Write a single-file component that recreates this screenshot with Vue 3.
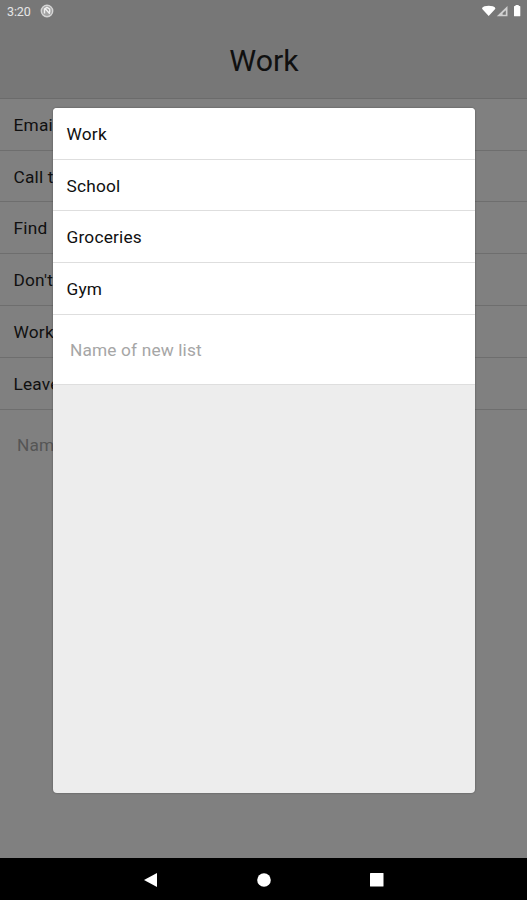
<script setup>
import { ref } from "vue";

const title = "Work";
const tasks = ref(["Email", "Call the", "Find", "Don't", "Work", "Leave"]);
const lists = ref(["Work", "School", "Groceries", "Gym"]);
const newTask = ref("");
const newList = ref("");

function addTask() {
  if (!newTask.value.trim()) return;
  tasks.value.push(newTask.value.trim());
  newTask.value = "";
}

function addList() {
  if (!newList.value.trim()) return;
  lists.value.push(newList.value.trim());
  newList.value = "";
}
</script>

<template>
  <div class="screen">
    <header class="header">
      <div class="status">
        <span class="clock">3:20</span>
        <svg class="notice" viewBox="0 0 14 14" width="14" height="14">
          <circle cx="7" cy="7" r="5.7" fill="#a2a2a2" stroke="#d4d4d4" stroke-width="1.4" />
          <path d="M4.5 9.5V5L7 3.4l2.7 1.7v3.4M5 4.5l4.8 5.2" fill="none" stroke="#f0f0f0" stroke-width="1.4" />
        </svg>
        <svg class="signals" viewBox="0 0 42 16" width="42" height="16">
          <path d="M2 6.8Q2 5 4.5 4.3Q8.7 3 12.9 4.3Q15.4 5 15.4 6.8L8.7 14Z" fill="#fff" />
          <path d="M27.5 4V14.3H16.8Z" fill="#d0d0d0" />
          <path d="M25.8 8.3V12.7H22.6V11.3Z" fill="#777" />
          <path d="M34 4.6Q34 4 34.6 4H35.5V3H38.7V4H39.7Q40.3 4 40.3 4.6V13.7Q40.3 14.3 39.7 14.3H34.6Q34 14.3 34 13.7Z" fill="#fff" />
        </svg>
      </div>
      <h1 class="title">{{ title }}</h1>
    </header>

    <main class="tasks">
      <div v-for="task in tasks" :key="task" class="row">{{ task }}</div>
      <input v-model="newTask" class="field" placeholder="Name of new task" @keyup.enter="addTask" />
    </main>

    <nav class="navbar">
      <svg viewBox="0 0 16 16" width="16" height="16"><path d="M1 8L14 1V15Z" fill="#fff" /></svg>
      <svg viewBox="0 0 16 16" width="16" height="16"><circle cx="8" cy="8" r="6.8" fill="#fff" /></svg>
      <svg viewBox="0 0 16 16" width="16" height="16"><rect x="1" y="1" width="13.5" height="13.5" rx="0.5" fill="#fff" /></svg>
    </nav>

    <!-- list picker -->
    <section class="modal">
      <div v-for="list in lists" :key="list" class="row">{{ list }}</div>
      <div class="entry">
        <input v-model="newList" class="field" placeholder="Name of new list" @keyup.enter="addList" />
      </div>
    </section>
  </div>
</template>

<style>
body {
  margin: 0;
}
</style>

<style scoped>
.screen {
  position: relative;
  display: flex;
  flex-direction: column;
  width: 527px;
  height: 900px;
  overflow: hidden;
  background: #808080;
  color: #101010;
  font-family: Roboto, "Liberation Sans", sans-serif;
  font-size: 17.3px;
}

.header {
  box-sizing: border-box;
  height: 98.8px;
  flex: none;
  background: #777;
  border-bottom: 1px solid #6b6b6b;
}

.status {
  display: flex;
  align-items: center;
  height: 22px;
  padding: 0 5px 0 7px;
  color: #e6e6e6;
}

.clock {
  font-size: 12.5px;
  letter-spacing: -0.1px;
}

.notice {
  margin-left: 9px;
}

.signals {
  margin-left: auto;
  margin-bottom: 2px;
}

.title {
  margin: 18px 0 0;
  padding-left: 1px;
  line-height: 42px;
  font-size: 30.3px;
  font-weight: 400;
  text-align: center;
}

.tasks {
  flex: 1;
}

.row {
  box-sizing: border-box;
  height: 51.8px;
  padding-left: 13.5px;
  line-height: 52px;
  letter-spacing: 0.2px;
  white-space: nowrap;
  border-bottom: 1px solid #6e6e6e;
}

.field {
  box-sizing: border-box;
  display: block;
  width: 100%;
  height: 71px;
  padding: 0 17px;
  border: 0;
  outline: none;
  background: transparent;
  font: inherit;
  letter-spacing: 0.15px;
}

.field::placeholder {
  color: #555;
  opacity: 1;
}

.navbar {
  display: flex;
  justify-content: space-between;
  align-items: center;
  box-sizing: border-box;
  height: 42px;
  padding: 1px 142px 0 143px;
  background: #000;
}

.modal {
  position: absolute;
  top: 108px;
  left: 53px;
  width: 422px;
  height: 685px;
  overflow: hidden;
  border-radius: 4px;
  background: #ededed;
  box-shadow: 0 0 2px rgba(0, 0, 0, 0.4);
}

.modal .row {
  height: 51.7px;
  background: #fff;
  border-color: #dedede;
}

.entry {
  background: #fff;
  border-bottom: 1px solid #dedede;
}

.modal .field {
  height: 69px;
  padding-top: 1px;
}

.modal .field::placeholder {
  color: #a6a6a6;
}
</style>
